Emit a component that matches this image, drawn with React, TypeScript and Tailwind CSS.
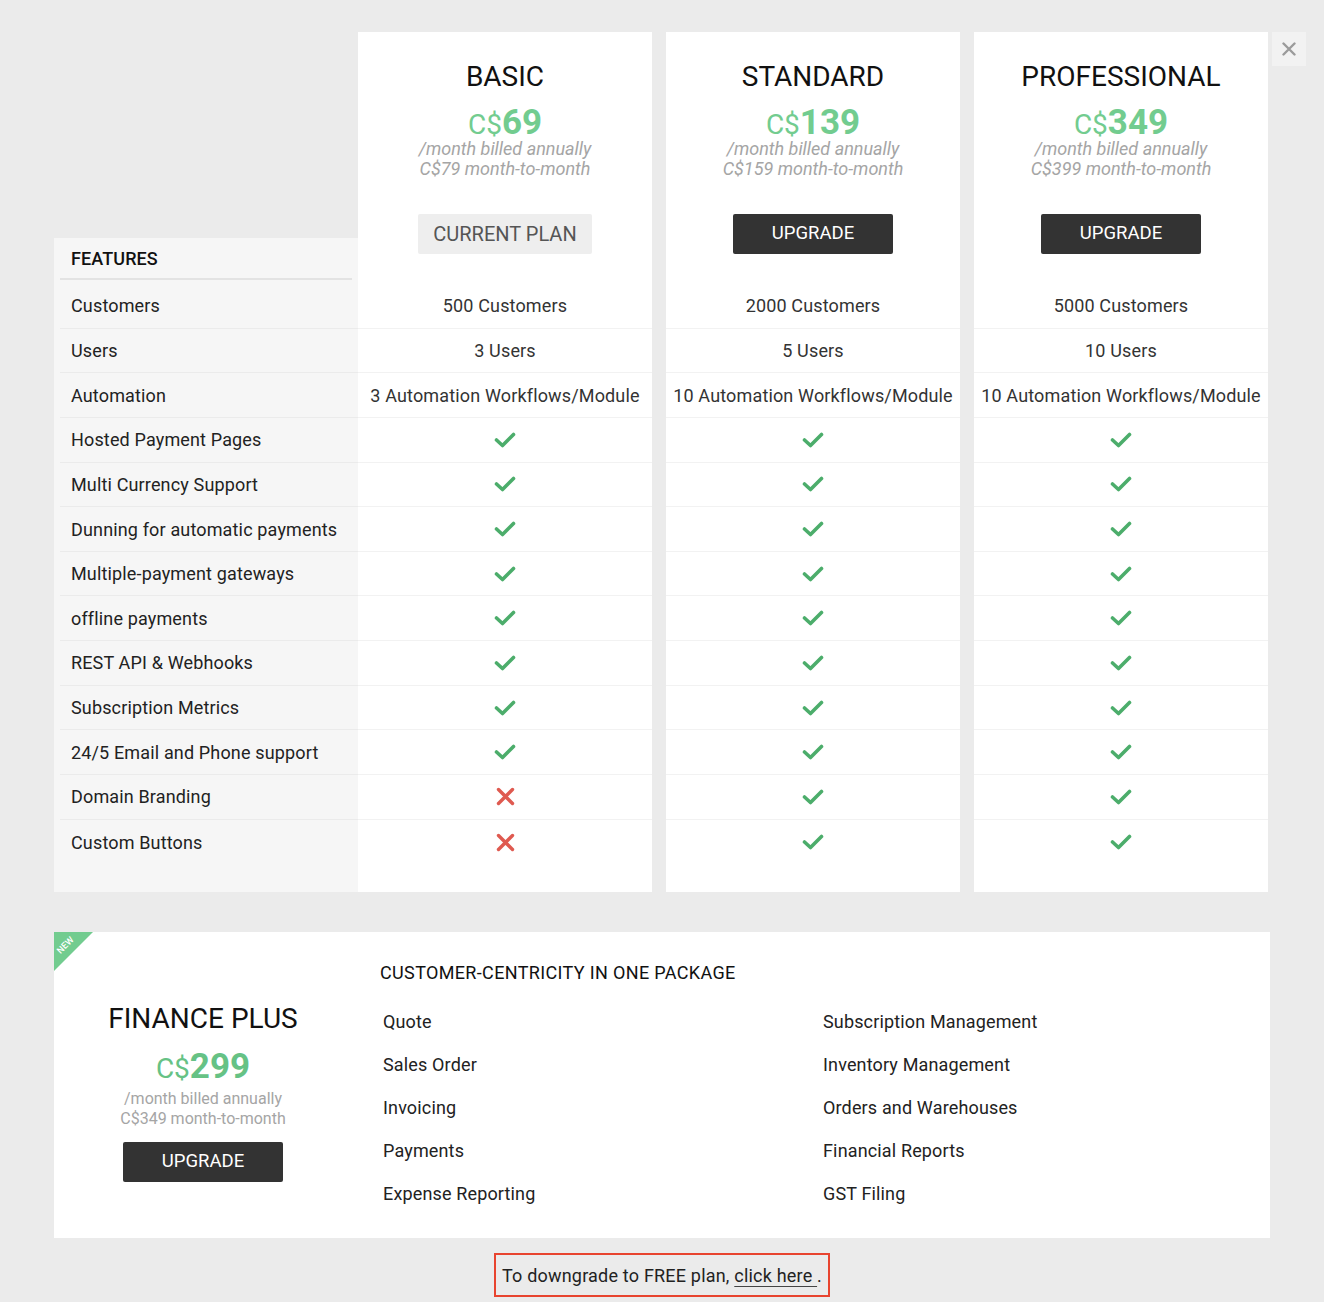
import React from 'react'

interface Plan {
  name: string
  price: string
  annual: string
  monthly: string
  current: boolean
  customers: string
  users: string
  automation: string
  flags: boolean[]
}

const features = [
  'Hosted Payment Pages',
  'Multi Currency Support',
  'Dunning for automatic payments',
  'Multiple-payment gateways',
  'offline payments',
  'REST API & Webhooks',
  'Subscription Metrics',
  '24/5 Email and Phone support',
  'Domain Branding',
  'Custom Buttons',
]

const plans: Plan[] = [
  {
    name: 'BASIC', price: '69', annual: '/month billed annually', monthly: 'C$79 month-to-month', current: true,
    customers: '500 Customers', users: '3 Users', automation: '3 Automation Workflows/Module',
    flags: [true, true, true, true, true, true, true, true, false, false],
  },
  {
    name: 'STANDARD', price: '139', annual: '/month billed annually', monthly: 'C$159 month-to-month', current: false,
    customers: '2000 Customers', users: '5 Users', automation: '10 Automation Workflows/Module',
    flags: [true, true, true, true, true, true, true, true, true, true],
  },
  {
    name: 'PROFESSIONAL', price: '349', annual: '/month billed annually', monthly: 'C$399 month-to-month', current: false,
    customers: '5000 Customers', users: '10 Users', automation: '10 Automation Workflows/Module',
    flags: [true, true, true, true, true, true, true, true, true, true],
  },
]

const packageItems = [
  ['Quote', 'Subscription Management'],
  ['Sales Order', 'Inventory Management'],
  ['Invoicing', 'Orders and Warehouses'],
  ['Payments', 'Financial Reports'],
  ['Expense Reporting', 'GST Filing'],
]

const Check = () => (
  <svg width="22" height="16" viewBox="0 0 22 16" fill="none">
    <path d="M2.5 8 L8.5 13.5 L19.5 2.5" stroke="#4cad6b" strokeWidth="3.6" strokeLinecap="round" strokeLinejoin="round" />
  </svg>
)

const Cross = () => (
  <svg width="19" height="19" viewBox="0 0 19 19" fill="none">
    <path d="M2.5 2.5 L16.5 16.5 M16.5 2.5 L2.5 16.5" stroke="#df5a50" strokeWidth="3.4" strokeLinecap="round" />
  </svg>
)

function Row({ children, last }: { children: React.ReactNode; last?: boolean }) {
  return (
    <div className={`h-[44.65px] flex items-center justify-center text-[18px] tracking-[0.15px] text-[#333] ${last ? '' : 'border-b border-[#f2f2f2]'}`}>
      {children}
    </div>
  )
}

export default function App() {
  const labels = ['Customers', 'Users', 'Automation', ...features]

  return (
    <div className="min-h-[1302px] bg-[#ebebeb] pt-[32px] relative" style={{ fontFamily: 'Roboto, "Liberation Sans", sans-serif' }}>
      <button className="absolute top-[32px] left-[1272px] w-[34px] h-[34px] bg-[#f2f2f2] flex items-center justify-center">
        <svg width="14" height="14" viewBox="0 0 14 14" fill="none">
          <path d="M1.5 1.5 L12.5 12.5 M12.5 1.5 L1.5 12.5" stroke="#9b9b9b" strokeWidth="2.4" strokeLinecap="round" />
        </svg>
      </button>

      <div className="ml-[54px] w-[1216px]">
        <div className="flex items-stretch">
          {/* features column */}
          <div className="w-[304px] mt-[206px] bg-[#f6f6f6] pb-[28px]">
            <div className="h-[42px] mx-[6px] pl-[11px] flex items-center border-b-2 border-[#e3e3e3] text-[18px] tracking-[0.1px] font-medium text-[#111]">
              FEATURES
            </div>
            <div className="h-[4px]" />
            {labels.map((l, i) => (
              <div key={l} className={`h-[44.65px] ml-[6px] pl-[11px] flex items-center text-[18px] tracking-[0.15px] text-[#222] ${i === labels.length - 1 ? '' : 'border-b border-[#ebebeb]'}`}>
                {l}
              </div>
            ))}
          </div>

          <div className="flex gap-[14px]">
            {plans.map(p => (
              <div key={p.name} className="w-[294px] bg-white pb-[28px]">
                <div className="pt-[29px] flex flex-col items-center">
                  <div className="text-[28px] leading-[32px] text-[#111]">{p.name}</div>
                  <div className="mt-[13px] h-[33px] leading-[33px] text-[#72cc8f] flex items-baseline">
                    <span className="text-[28px]">C$</span>
                    <span className="text-[35px] font-bold">{p.price}</span>
                  </div>
                  <div className="text-[18px] leading-[20px] italic text-[#a5a5a5]">{p.annual}</div>
                  <div className="text-[18px] leading-[20px] italic text-[#a5a5a5]">{p.monthly}</div>
                  {p.current ? (
                    <button className="mt-[35px] w-[174px] h-[40px] rounded-[2px] bg-[#eeeeee] text-[20px] text-[#555]">CURRENT PLAN</button>
                  ) : (
                    <button className="mt-[35px] w-[160px] h-[40px] rounded-[2px] bg-[#333333] text-[18.5px] text-white">UPGRADE</button>
                  )}
                  <div className="h-[30px]" />
                </div>
                <Row>{p.customers}</Row>
                <Row>{p.users}</Row>
                <Row>{p.automation}</Row>
                {p.flags.map((f, i) => (
                  <Row key={i} last={i === p.flags.length - 1}>{f ? <Check /> : <Cross />}</Row>
                ))}
              </div>
            ))}
          </div>
        </div>

        {/* finance plus */}
        <div className="mt-[40px] h-[306px] bg-white flex relative overflow-hidden">
          <div className="absolute top-0 left-0 w-0 h-0 border-t-[39px] border-r-[39px] border-t-[#72cc8f] border-r-transparent" />
          <div className="absolute top-[9px] left-[2px] text-[9px] font-medium text-white -rotate-45 leading-none">NEW</div>

          <div className="w-[298px] pt-[71px] flex flex-col items-center">
            <div className="text-[28px] leading-[32px] text-[#111]">FINANCE PLUS</div>
            <div className="mt-[15px] h-[34px] leading-[34px] text-[#66c285] flex items-baseline">
              <span className="text-[28px]">C$</span>
              <span className="text-[35px] font-bold">299</span>
            </div>
            <div className="mt-[5px] text-[16px] leading-[20px] text-[#a5a5a5]">/month billed annually</div>
            <div className="text-[16px] leading-[20px] text-[#a5a5a5]">C$349 month-to-month</div>
            <button className="mt-[13px] w-[160px] h-[40px] rounded-[2px] bg-[#333333] text-[18.5px] text-white">UPGRADE</button>
          </div>

          <div className="pl-[28px] pt-[29px] flex-1">
            <div className="text-[18px] leading-[24px] tracking-[0.35px] text-[#111]">CUSTOMER-CENTRICITY IN ONE PACKAGE</div>
            <div className="mt-[15px] pl-[3px]">
              {packageItems.map(([a, b]) => (
                <div key={a} className="h-[43px] grid grid-cols-[440px_1fr] items-center text-[18px] tracking-[0.15px] text-[#222]">
                  <span>{a}</span>
                  <span>{b}</span>
                </div>
              ))}
            </div>
          </div>
        </div>
      </div>

      <div className="mt-[15px] flex justify-center">
        <div className="w-[336px] h-[44px] border-2 border-[#e8442f] flex items-center justify-center text-[18px] tracking-[0.2px] text-[#222]">
          <span>
            To downgrade to FREE plan, <a href="#" className="underline underline-offset-[4px] decoration-[#444]">click here </a>.
          </span>
        </div>
      </div>
    </div>
  )
}
